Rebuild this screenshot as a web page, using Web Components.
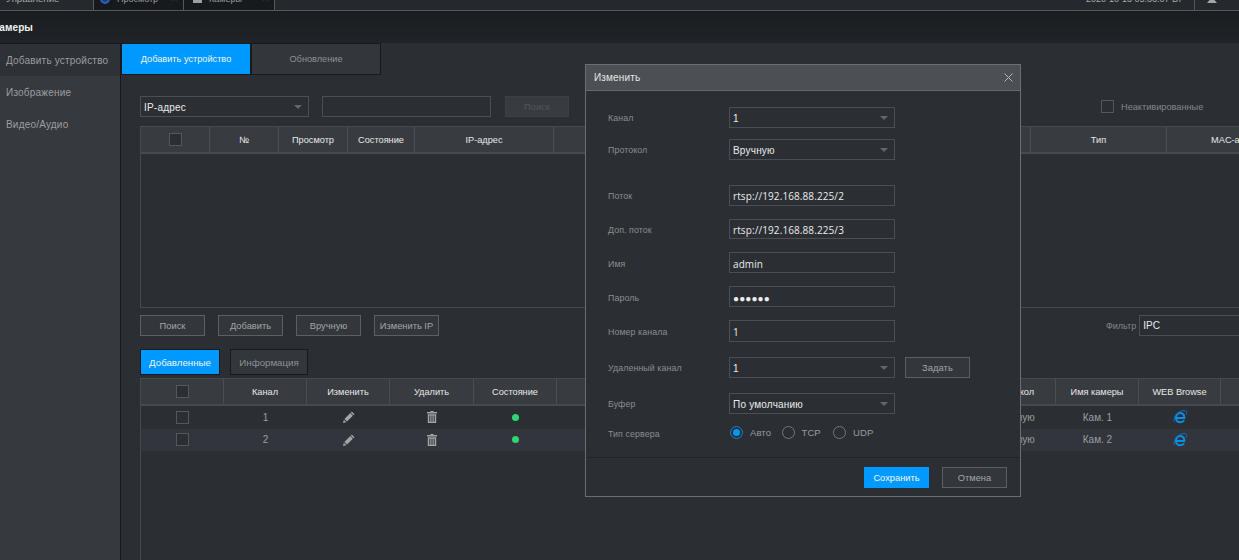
<!DOCTYPE html>
<html lang="ru">
<head>
<meta charset="utf-8">
<title>Камеры</title>
<style>
  html, body { margin: 0; height: 100%; background: #2b2e33; overflow: hidden; }
  body { font: 10px "Liberation Sans", Arial, sans-serif; color: #c4c6c9; }
</style>
</head>
<body>
<dvr-app></dvr-app>

<script>
const ICONS = {
  pencil: `<svg width="12" height="12" viewBox="0 0 13 13"><path fill="#a2a5a9" d="M9.6.6l2.8 2.8-1.1 1.1L8.500 1.700zM7.900 2.300l2.800 2.800-6.400 6.400-2.800-2.800z"/><path fill="#a2a5a9" d="M.9 9.400l2.700 2.700L0 13z"/></svg>`,
  trash: `<svg width="10" height="12" viewBox="0 0 10 12"><path fill="#a2a5a9" d="M3.500 0h3v1H10v1.600H0V1h3.500zM.8 3.300h8.400V12H.8z"/><path fill="#2b2e33" d="M2.300 4.500h1v6.300h-1zM4.500 4.500h1v6.300h-1zM6.700 4.500h1v6.300h-1z"/></svg>`,
  ie: `<svg width="15" height="14" viewBox="0 0 15 14"><path fill="none" stroke="#0a8fe6" stroke-width="2" d="M3 8h8.300c.2-3-1.500-4.900-4-4.900-2.600 0-4.400 2-4.400 4.600 0 2.700 1.900 4.500 4.400 4.500 1.700 0 3-.7 3.800-2"/><path fill="none" stroke="#0a6fc0" stroke-width="1" d="M1.500 12C.2 9.500 1.400 5.500 5 2.600 8 .4 12.500 0 13.500 1.400c.5.900.2 2.200-.5 3.300"/></svg>`,
  close: `<svg width="9" height="9" viewBox="0 0 9 9"><path stroke="#b5b7ba" stroke-width="1" fill="none" d="M.5.500l8 8M8.500.500l-8 8"/></svg>`
};

class DvrButton extends HTMLElement {
  connectedCallback() {
    this.attachShadow({ mode: "open" }).innerHTML = `
    <style>
      :host {
        display: inline-flex; align-items: center; justify-content: center;
        box-sizing: border-box; height: 21px; width: 65px;
        border: 1px solid #5c5f63; background: #33363b; color: #a4a6a9;
        font-size: 9.3px;
      }
      :host([primary]) { background: #0099ff; border-color: #0099ff; color: #f2f7fb; }
      :host([disabled]) { background: #383b3f; border-color: #3c3f43; color: #53565a; }
    </style>
    <slot></slot>`;
  }
}

class DvrTab extends HTMLElement {
  connectedCallback() {
    this.attachShadow({ mode: "open" }).innerHTML = `
    <style>
      :host {
        display: flex; align-items: center; justify-content: center;
        box-sizing: border-box; border: 1px solid #17191c;
        background: #33363b; color: #8f9195; font-size: 9.2px;
      }
      :host([active]) { background: #0099ff; color: #eef5fb; }
    </style>
    <slot></slot>`;
  }
}

class DvrSelect extends HTMLElement {
  connectedCallback() {
    this.attachShadow({ mode: "open" }).innerHTML = `
    <style>
      :host {
        display: flex; align-items: center; justify-content: space-between;
        box-sizing: border-box; height: 21px; padding: 1px 6px 0 3px;
        border: 1px solid #4b4e55; color: #eceded; font-size: 10px;
        letter-spacing: .2px;
      }
      i { width: 0; height: 0; border: 4px solid transparent; border-top: 4px solid #63666a; border-bottom: 0; }
    </style>
    <span><slot></slot></span><i></i>`;
  }
}

class DvrInput extends HTMLElement {
  connectedCallback() {
    this.attachShadow({ mode: "open" }).innerHTML = `
    <style>
      :host {
        display: flex; align-items: center;
        box-sizing: border-box; height: 21px; padding: 0 3px;
        border: 1px solid #4b4e55; color: #eceded;
        font: 10px "Open Sans", "Liberation Sans", sans-serif;
      }
    </style>
    <slot></slot>`;
  }
}

class DvrCheck extends HTMLElement {
  connectedCallback() {
    this.attachShadow({ mode: "open" }).innerHTML = `
    <style>
      :host { display: inline-block; box-sizing: border-box; width: 13px; height: 13px; border: 1px solid #54575b; background: #2b2e33; }
    </style>`;
  }
}

class DvrRadio extends HTMLElement {
  connectedCallback() {
    this.attachShadow({ mode: "open" }).innerHTML = `
    <style>
      :host { display: inline-flex; align-items: center; gap: 7px; width: 51.5px; color: #9a9c9f; font-size: 9.5px; }
      i { box-sizing: border-box; width: 13px; height: 13px; border-radius: 50%; border: 1px solid #75787b; display: flex; align-items: center; justify-content: center; flex: none; }
      :host([checked]) i { border-color: #0a86d8; }
      :host([checked]) i::after { content: ""; width: 7px; height: 7px; border-radius: 50%; background: #0099ff; }
    </style>
    <i></i><span><slot></slot></span>`;
  }
}

/* header + rows from a column list, cells are html strings */
class DvrTable extends HTMLElement {
  set config(c) {
    const cols = c.cols.map(w => w + "px").join(" ");
    const row = (cells, cls) => `<div class="row ${cls}">${cells.map(t => `<div>${t}</div>`).join("")}</div>`;
    this.attachShadow({ mode: "open" }).innerHTML = `
    <style>
      :host { display: block; box-sizing: border-box; border: 1px solid #464950; border-right: 0; overflow: hidden; font-size: 9.2px; }
      .row { display: grid; grid-template-columns: ${cols}; }
      .row div { display: flex; align-items: center; justify-content: center; white-space: nowrap; }
      .head { box-sizing: border-box; height: 27px; background: #383b40; border-bottom: 2px solid #464950; color: #e8e9ea; }
      .head div { border-right: 1px solid #4a4d54; }
      .cell { height: 23px; color: #9c9ea1; font-size: 10px; }
      .cell div { padding-bottom: 1px; }
      .head + .cell + .cell { height: 22px; background: #32353b; }
    </style>
    ${row(c.head, "head")}
    ${c.rows.map(r => row(r, "cell")).join("")}`;
  }
}

class DvrField extends HTMLElement {
  connectedCallback() {
    this.attachShadow({ mode: "open" }).innerHTML = `
    <style>
      :host { display: grid; grid-template-columns: 121px 166px auto; align-items: center; color: #8b8d91; font-size: 8.8px; letter-spacing: .1px; }
      :host([low]) span { padding-top: 2px; }
      :host([low]) ::slotted(dvr-input) { padding-top: 2px; }
      ::slotted([slot="after"]) { margin-left: 10px; }
    </style>
    <span>${this.getAttribute("label")}</span><slot></slot><slot name="after"></slot>`;
  }
}

class DvrModal extends HTMLElement {
  connectedCallback() {
    this.attachShadow({ mode: "open" }).innerHTML = `
    <style>
      :host {
        position: absolute; left: 585px; top: 64px; width: 436px; height: 433px;
        box-sizing: border-box; border: 1px solid #6c6f72; background: #2b2e33;
        display: flex; flex-direction: column;
      }
      header { display: flex; align-items: center; justify-content: space-between; height: 26px; box-sizing: border-box; padding: 0 7px 0 8px; background: #4c4f53; border-bottom: 1px solid #66696c; color: #e6e7e8; font-size: 10px; letter-spacing: .15px; flex: none; }
      svg { display: block; }
      main { flex: 1; padding: 16px 0 0 22px; display: flex; flex-direction: column; }
      footer { flex: none; height: 39px; box-sizing: border-box; border-top: 1px solid #222428; display: flex; justify-content: flex-end; align-items: flex-start; gap: 13px; padding: 9px 13px 0 0; }
    </style>
    <header><span>Изменить</span>${ICONS.close}</header>
    <main><slot></slot></main>
    <footer><slot name="foot"></slot></footer>`;
  }
}

class DvrApp extends HTMLElement {
  connectedCallback() {
    const root = this.attachShadow({ mode: "open" });
    root.innerHTML = `
    <style>
      :host { display: grid; grid-template-rows: 11px 32px 1fr; height: 560px; overflow: hidden; position: relative; }
      .strip { display: flex; align-items: flex-start; border-bottom: 1px solid #55585b; background: #25282c; overflow: hidden; box-sizing: border-box; }
      .strip > div { height: 10px; display: flex; flex: none; color: #a8aaad; font-size: 9.6px; box-sizing: border-box; line-height: 10px; white-space: nowrap; }
      .strip span { display: block; margin-top: -6px; }
      .strip .mng { width: 93px; padding-left: 6px; }
      .strip .tab { width: 91px; padding: 0 5px 0 6px; border-right: 1px solid #55585b; background: #17191c; font-size: 9px; }
      .strip .tab + .tab { padding-left: 9px; }
      .strip .mng + .tab { border-left: 1px solid #55585b; }
      .strip .tab span { flex: 1; padding-left: 7px; color: #9a9c9f; }
      .strip .tab .x { flex: none; padding: 0; color: #85878a; font-size: 8px; margin-top: -6px; }
      .strip .dot { width: 10px; height: 10px; margin-top: -6px; border-radius: 50%; border: 2px solid #2c62b8; background: #1a3d80; box-sizing: border-box; flex: none; }
      .strip .cam { width: 9px; height: 3px; background: #9c9ea1; flex: none; }
      .strip .clock { margin-left: auto; width: 108px; font-size: 9px; }
      .strip .user { width: 45px; border-left: 1px solid #55585b; padding-left: 12px; }
      .strip .user i { width: 10px; height: 3px; background: #a3a5a8; clip-path: polygon(25% 0, 75% 0, 100% 100%, 0 100%); }
      .title { background: linear-gradient(#1a1d20, #202327); color: #f1f1f1; font-weight: 700; font-size: 10px; display: flex; align-items: center; overflow: hidden; }
      .title span { margin-left: -7px; letter-spacing: .1px; }
      .body { display: grid; grid-template-columns: 121px 1fr; min-height: 0; }
      nav { background: #36393e; border-right: 1px solid #17191c; box-sizing: border-box; border-top: 1px solid #17191c; font-size: 10px; color: #9c9ea1; letter-spacing: .2px; }
      nav div { height: 32px; display: flex; align-items: center; padding-left: 6px; white-space: nowrap; }
      nav div:first-child { background: #2e3136; }
      .main { min-width: 0; overflow: hidden; padding-left: 19px; }
      .tabs { display: grid; grid-template-columns: 130px 130px; margin-left: -19px; height: 32px; }
      .search { display: grid; grid-template-columns: 169px 169px 64px; column-gap: 13px; height: 21px; margin-top: 21px; position: relative; }
      .search dvr-button { margin-left: 1px; }
      .inact { position: absolute; left: 961px; top: 4px; display: flex; gap: 7px; align-items: center; color: #85878a; font-size: 9.2px; white-space: nowrap; }
      .t1 { height: 182px; margin-top: 9px; }
      .acts { display: flex; gap: 13px; margin-top: 7px; position: relative; }
      .filter { position: absolute; left: 966px; top: 0; display: flex; align-items: center; gap: 3px; color: #85878a; font-size: 9px; }
      .filter dvr-input { width: 130px; font: 10px "Liberation Sans", sans-serif; }
      .tabs2 { display: flex; gap: 10px; margin-top: 13px; height: 26px; }
      .tabs2 dvr-tab { font-size: 9.7px; }
      .t2 { height: 183px; margin-top: 3px; }
    </style>
    <div class="strip">
      <div class="mng"><span>Управление</span></div>
      <div class="tab"><i class="dot"></i><span>Просмотр</span><span class="x">✕</span></div>
      <div class="tab"><i class="cam"></i><span>Камеры</span><span class="x">✕</span></div>
      <div class="clock"><span>2020-10-13 05:36:07 Вт</span></div>
      <div class="user"><i class="cam"></i></div>
    </div>
    <div class="title"><span>Камеры</span></div>
    <div class="body">
      <nav><div>Добавить устройство</div><div>Изображение</div><div>Видео/Аудио</div></nav>
      <div class="main">
        <div class="tabs"><dvr-tab active>Добавить устройство</dvr-tab><dvr-tab>Обновление</dvr-tab></div>
        <div class="search">
          <dvr-select>IP-адрес</dvr-select><dvr-input></dvr-input><dvr-button disabled style="width:64px">Поиск</dvr-button>
          <div class="inact"><dvr-check></dvr-check><span>Неактивированные</span></div>
        </div>
        <dvr-table class="t1"></dvr-table>
        <div class="acts">
          <dvr-button>Поиск</dvr-button><dvr-button>Добавить</dvr-button><dvr-button>Вручную</dvr-button><dvr-button>Изменить IP</dvr-button>
          <div class="filter"><span>Фильтр</span><dvr-input>IPC</dvr-input></div>
        </div>
        <div class="tabs2"><dvr-tab active style="width:80px">Добавленные</dvr-tab><dvr-tab style="width:78px">Информация</dvr-tab></div>
        <dvr-table class="t2"></dvr-table>
      </div>
    </div>
    <dvr-modal>
      <dvr-field label="Канал"><dvr-select>1</dvr-select></dvr-field>
      <dvr-field label="Протокол" style="margin-top:11px"><dvr-select>Вручную</dvr-select></dvr-field>
      <dvr-field label="Поток" style="margin-top:25px"><dvr-input>rtsp://192.168.88.225/2</dvr-input></dvr-field>
      <dvr-field low label="Доп. поток" style="margin-top:13px"><dvr-input style="height:20px">rtsp://192.168.88.225/3</dvr-input></dvr-field>
      <dvr-field low label="Имя" style="margin-top:13px"><dvr-input>admin</dvr-input></dvr-field>
      <dvr-field low label="Пароль" style="margin-top:13px"><dvr-input>●●●●●●</dvr-input></dvr-field>
      <dvr-field low label="Номер канала" style="margin-top:13px"><dvr-input style="height:22px">1</dvr-input></dvr-field>
      <dvr-field label="Удаленный канал" style="margin-top:15px"><dvr-select>1</dvr-select><dvr-button slot="after">Задать</dvr-button></dvr-field>
      <dvr-field label="Буфер" style="margin-top:15px"><dvr-select>По умолчанию</dvr-select></dvr-field>
      <dvr-field label="Тип сервера" style="margin-top:11px">
        <div style="display:flex;height:14px;margin:0 0 4px 1px;white-space:nowrap"><dvr-radio checked>Авто</dvr-radio><dvr-radio>TCP</dvr-radio><dvr-radio>UDP</dvr-radio></div>
      </dvr-field>
      <dvr-button slot="foot" primary>Сохранить</dvr-button>
      <dvr-button slot="foot">Отмена</dvr-button>
    </dvr-modal>`;

    const dot = `<i style="width:7px;height:7px;border-radius:50%;background:#2ed573;display:block"></i>`;
    const chk = `<dvr-check></dvr-check>`;
    root.querySelector(".t1").config = {
      cols: [69, 69, 69, 67, 139, 477, 136, 138],
      head: [chk, "№", "Просмотр", "Состояние", "IP-адрес", "", "Тип", "MAC-адрес"],
      rows: []
    };
    root.querySelector(".t2").config = {
      cols: [83, 83, 83, 84, 83, 416, 83, 83, 82, 60],
      head: [chk, "Канал", "Изменить", "Удалить", "Состояние", "", "Протокол", "Имя камеры", "WEB Browse", ""],
      rows: [
        [chk, "1", ICONS.pencil, ICONS.trash, dot, "", "Вручную", "Кам. 1", ICONS.ie, ""],
        [chk, "2", ICONS.pencil, ICONS.trash, dot, "", "Вручную", "Кам. 2", ICONS.ie, ""]
      ]
    };
  }
}

customElements.define("dvr-button", DvrButton);
customElements.define("dvr-tab", DvrTab);
customElements.define("dvr-select", DvrSelect);
customElements.define("dvr-input", DvrInput);
customElements.define("dvr-check", DvrCheck);
customElements.define("dvr-radio", DvrRadio);
customElements.define("dvr-table", DvrTable);
customElements.define("dvr-field", DvrField);
customElements.define("dvr-modal", DvrModal);
customElements.define("dvr-app", DvrApp);
</script>
</body>
</html>
